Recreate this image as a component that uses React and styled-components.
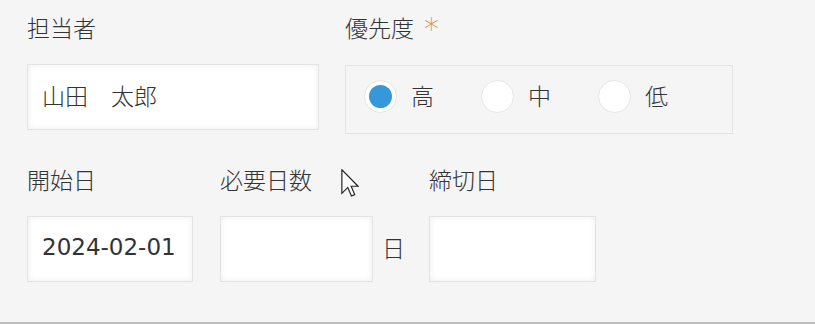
import React, { useState } from "react"
import styled, { createGlobalStyle } from "styled-components"

const Global = createGlobalStyle`
  html, body { margin: 0; padding: 0; background: #f5f5f5; }
  body { font-family: "DejaVu Sans", "Noto Sans CJK JP", sans-serif; color: #333; }
`;

const Page = styled.div`
  position: relative;
  box-sizing: border-box;
  height: 324px;
  padding: 15px 0 0 27px;
  background: #f5f5f5;
  border-bottom: 2px solid #bdbdbd;
  display: flex;
  flex-direction: column;
  gap: 33px;
`;

const Row = styled.div`
  display: flex;
  align-items: flex-start;
  gap: ${p => p.$gap || 26}px;
`;

const Field = styled.div`
  display: flex;
  flex-direction: column;
  gap: 17px;
`;

const Label = styled.div`
  font-size: 23px;
  font-weight: 300;
  line-height: 28px;
  height: 32px;
  white-space: nowrap;
`;

const Req = styled.span`
  color: #e08a33;
  margin-left: 10px;
  font-size: 30px;
  font-weight: 300;
  vertical-align: top;
  line-height: 28px;
`;

const InputLine = styled.div`
  display: flex;
  align-items: center;
  gap: 9px;
`;

const Input = styled.input`
  box-sizing: border-box;
  width: ${p => p.$w}px;
  height: 66px;
  margin: 0;
  padding: 0 14px 4px;
  border: 1px solid #e3e3e3;
  background: #fff;
  box-shadow: inset 0 0 6px rgba(0, 0, 0, 0.07);
  font-family: inherit;
  font-size: 23px;
  font-weight: ${p => (p.$latin ? 400 : 300)};
  color: #333;
  outline: none;
`;

const Unit = styled.span`
  font-size: 23px;
  font-weight: 300;
  margin-right: -3px;
  padding-bottom: 5px;
`;

const RadioGroup = styled.div`
  box-sizing: border-box;
  width: 388px;
  height: 69px;
  margin-top: 1px;
  padding: 14px 18px 0;
  border: 1px solid #e3e3e3;
  display: flex;
  gap: 47px;
`;

const RadioItem = styled.label`
  display: flex;
  align-items: center;
  gap: 14px;
  height: 33px;
  font-size: 23px;
  font-weight: 300;
  cursor: pointer;
`;

const RadioText = styled.span`
  padding-bottom: 4px;
`;

const Circle = styled.span`
  box-sizing: border-box;
  width: 33px;
  height: 33px;
  border-radius: 50%;
  background: #fff;
  border: 1px solid #e6e6e6;
  display: flex;
  align-items: center;
  justify-content: center;
  &::after {
    content: "";
    width: 23px;
    height: 23px;
    border-radius: 50%;
    background: ${p => (p.$on ? "#3498db" : "transparent")};
  }
`;

const Cursor = styled.svg`
  position: absolute;
  left: 341px;
  top: 169px;
  width: 18px;
  height: 28px;
  pointer-events: none;
`;

const priorities = ["高", "中", "低"];

export default function App() {
  const [prio, setPrio] = useState("高");
  return (
    <>
      <Global />
      <Page>
        <Row $gap={26}>
          <Field>
            <Label>担当者</Label>
            <Input $w={292} defaultValue="山田　太郎" />
          </Field>
          <Field>
            <Label>優先度<Req>*</Req></Label>
            <RadioGroup>
              {priorities.map(p => (
                <RadioItem key={p} onClick={() => setPrio(p)}>
                  <Circle $on={prio === p} />
                  <RadioText>{p}</RadioText>
                </RadioItem>
              ))}
            </RadioGroup>
          </Field>
        </Row>
        <Row $gap={27}>
          <Field>
            <Label>開始日</Label>
            <Input $w={166} $latin defaultValue="2024-02-01" />
          </Field>
          <Field>
            <Label>必要日数</Label>
            <InputLine>
              <Input $w={153} />
              <Unit>日</Unit>
            </InputLine>
          </Field>
          <Field>
            <Label>締切日</Label>
            <Input $w={167} />
          </Field>
        </Row>
        <Cursor viewBox="0 0 12 19">
          <path d="M0.5 0.5 V16.5 L4.5 12.5 L7 18.3 L9.2 17.4 L6.8 11.7 H11.5 Z" fill="#fff" stroke="#222" strokeWidth="0.8" strokeLinejoin="miter" />
        </Cursor>
      </Page>
    </>
  )
}
